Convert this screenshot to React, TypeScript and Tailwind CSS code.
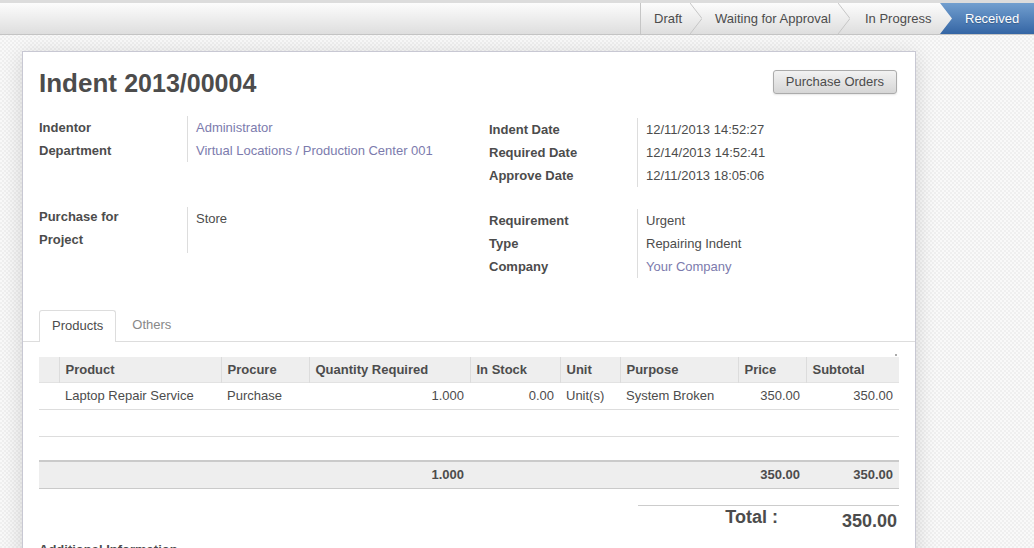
import React from "react";

interface Line {
  product: string;
  procure: string;
  qty: string;
  stock: string;
  unit: string;
  purpose: string;
  price: string;
  subtotal: string;
}

const lines: Line[] = [
  {
    product: "Laptop Repair Service",
    procure: "Purchase",
    qty: "1.000",
    stock: "0.00",
    unit: "Unit(s)",
    purpose: "System Broken",
    price: "350.00",
    subtotal: "350.00",
  },
];

const Chevron = () => (
  <svg width="12" height="31" viewBox="0 0 12 31" className="shrink-0">
    <polyline points="0,0 12,15.5 0,31" fill="none" stroke="#c6c6c6" strokeWidth="1" />
  </svg>
);

const Field = ({ label, value, link }: { label: string; value: string; link?: boolean }) => (
  <div className="grid grid-cols-[148px_1fr] h-[23px]">
    <div className="flex items-center font-bold">{label}</div>
    <div className={`flex items-center border-l border-[#dddddd] pl-[8px] ${link ? "text-[#7c7bad]" : ""}`}>
      {value}
    </div>
  </div>
);

const App = () => {
  return (
    <div className="min-h-screen overflow-hidden bg-[#f4f4f4] bg-[image:repeating-conic-gradient(#efefef_0%_25%,#f9f9f9_0%_50%)] bg-[length:4px_4px] font-['Liberation_Sans',Arial,sans-serif] text-[13px] text-[#4c4c4c]">
      {/* status bar */}
      <div className="h-[35px] border-t-[3px] border-b border-t-[#dcdcdc] border-b-[#c4c4c4] bg-linear-to-b from-[#fcfcfc] to-[#dedede] flex justify-end">
        <div className="flex h-[31px] items-center border-l border-[#c6c6c6]">
          <div className="w-[49px] pl-[13px]">Draft</div>
          <Chevron />
          <div className="w-[136px] pl-[13px] whitespace-nowrap">Waiting for Approval</div>
          <Chevron />
          <div className="w-[90px] pl-[15px] whitespace-nowrap">In Progress</div>
          <div className="w-[94px] h-[31px] pl-[25px] flex items-center text-white bg-linear-to-b from-[#729fcf] to-[#3465a4] [text-shadow:0_1px_1px_rgba(0,0,0,0.25)] [clip-path:polygon(0_0,100%_0,100%_100%,0_100%,12px_50%)]">
            Received
          </div>
        </div>
      </div>

      {/* sheet */}
      <div className="pt-[16px] pl-[22px]">
        <div className="w-[894px] min-h-[600px] bg-white border border-[#c8c8d3] shadow-[0_4px_20px_rgba(0,0,0,0.15)] pt-[16px] pl-[16px] pr-[16px] pb-10">
          <div className="flex justify-between items-start h-[30px]">
            <h1 className="h-[30px] font-bold text-[26px] leading-[30px] text-[#4c4c4c] whitespace-nowrap">
              Indent <span className="text-[25px]">2013/00004</span>
            </h1>
            <button className="mt-[2px] mr-[2px] h-[24px] w-[124px] rounded-[3px] border border-[#ababab] bg-linear-to-b from-[#f2f2f2] to-[#d6d6d6] text-[13px] text-[#4c4c4c] shadow-[0_1px_2px_rgba(0,0,0,0.1)]">
              Purchase Orders
            </button>
          </div>

          {/* group 1 */}
          <div className="mt-[18px] grid grid-cols-[450px_1fr]">
            <div>
              <Field label="Indentor" value="Administrator" link />
              <Field label="Department" value="Virtual Locations / Production Center 001" link />
            </div>
            <div className="pt-[2px]">
              <Field label="Indent Date" value="12/11/2013 14:52:27" />
              <Field label="Required Date" value="12/14/2013 14:52:41" />
              <Field label="Approve Date" value="12/11/2013 18:05:06" />
            </div>
          </div>

          {/* group 2 */}
          <div className="mt-[20px] grid grid-cols-[450px_1fr]">
            <div>
              <div className="grid grid-cols-[148px_1fr] h-[46px]">
                <div className="flex flex-col font-bold">
                  <div className="h-[23px] flex items-center -mt-[2px]">Purchase for</div>
                  <div className="h-[23px] flex items-center">Project</div>
                </div>
                <div className="border-l border-[#dddddd] pl-[8px]">
                  <div className="h-[23px] flex items-center">Store</div>
                </div>
              </div>
            </div>
            <div className="pt-[2px]">
              <Field label="Requirement" value="Urgent" />
              <Field label="Type" value="Repairing Indent" />
              <Field label="Company" value="Your Company" link />
            </div>
          </div>

          {/* tabs */}
          <div className="mt-[32px] -mx-[16px] px-[16px] border-b border-[#dddddd] flex h-[32px]">
            <div className="h-[32px] -mb-px px-[12px] border border-b-0 border-[#dddddd] rounded-t-[3px] bg-white leading-[30px] text-[#4c4c4c]">
              Products
            </div>
            <div className="ml-[3px] px-[13px] leading-[30px] text-[#888888]">Others</div>
          </div>

          <div className="mt-[12px] flex justify-end pr-[2px]">
            <div className="w-[2px] h-[2px] bg-[#aaaaaa]" />
          </div>

          {/* lines */}
          <table className="mt-[1px] w-[860px] table-fixed">
            <colgroup>
              <col className="w-[20px]" />
              <col className="w-[162px]" />
              <col className="w-[88px]" />
              <col className="w-[161px]" />
              <col className="w-[90px]" />
              <col className="w-[60px]" />
              <col className="w-[118px]" />
              <col className="w-[68px]" />
              <col className="w-[93px]" />
            </colgroup>
            <thead>
              <tr className="h-[25px] bg-[#eeeeee] border-b border-[#e2e2e2] font-bold text-left">
                <th />
                <th className="px-[6px] border-l border-[#dcdcdc] text-left">Product</th>
                <th className="px-[6px] border-l border-[#dcdcdc] text-left">Procure</th>
                <th className="px-[6px] border-l border-[#dcdcdc] text-left">Quantity Required</th>
                <th className="px-[6px] border-l border-[#dcdcdc] text-left">In Stock</th>
                <th className="px-[6px] border-l border-[#dcdcdc] text-left">Unit</th>
                <th className="px-[6px] border-l border-[#dcdcdc] text-left">Purpose</th>
                <th className="px-[6px] border-l border-[#dcdcdc] text-left">Price</th>
                <th className="px-[6px] border-l border-[#dcdcdc] text-left">Subtotal</th>
              </tr>
            </thead>
            <tbody>
              {lines.map((l) => (
                <tr key={l.product} className="h-[27px] border-b border-[#dddddd]">
                  <td />
                  <td className="px-[6px] whitespace-nowrap">{l.product}</td>
                  <td className="px-[6px]">{l.procure}</td>
                  <td className="px-[6px] text-right">{l.qty}</td>
                  <td className="px-[6px] text-right">{l.stock}</td>
                  <td className="px-[6px]">{l.unit}</td>
                  <td className="px-[6px] whitespace-nowrap">{l.purpose}</td>
                  <td className="px-[6px] text-right">{l.price}</td>
                  <td className="px-[6px] text-right">{l.subtotal}</td>
                </tr>
              ))}
              <tr className="h-[27px] border-b border-[#dddddd]">
                <td colSpan={9} />
              </tr>
              <tr className="h-[25px]">
                <td colSpan={9} />
              </tr>
            </tbody>
            <tfoot>
              <tr className="h-[27px] bg-[#eeeeee] border-t-[2px] border-b border-[#cacaca] font-bold">
                <td />
                <td />
                <td />
                <td className="px-[6px] text-right">1.000</td>
                <td />
                <td />
                <td />
                <td className="px-[6px] text-right">350.00</td>
                <td className="px-[6px] text-right">350.00</td>
              </tr>
            </tfoot>
          </table>

          {/* total */}
          <div className="mt-[16px] ml-auto w-[261px] border-t border-[#cccccc] grid grid-cols-[146px_1fr] text-[18px] font-bold leading-[22px]">
            <div className="text-right pr-[6px]">Total :</div>
            <div className="text-right pr-[2px] pt-[4px]">350.00</div>
          </div>

          <div className="mt-[10px] font-bold leading-[16px]">Additional Information</div>
        </div>
      </div>
    </div>
  );
};

export default App;
